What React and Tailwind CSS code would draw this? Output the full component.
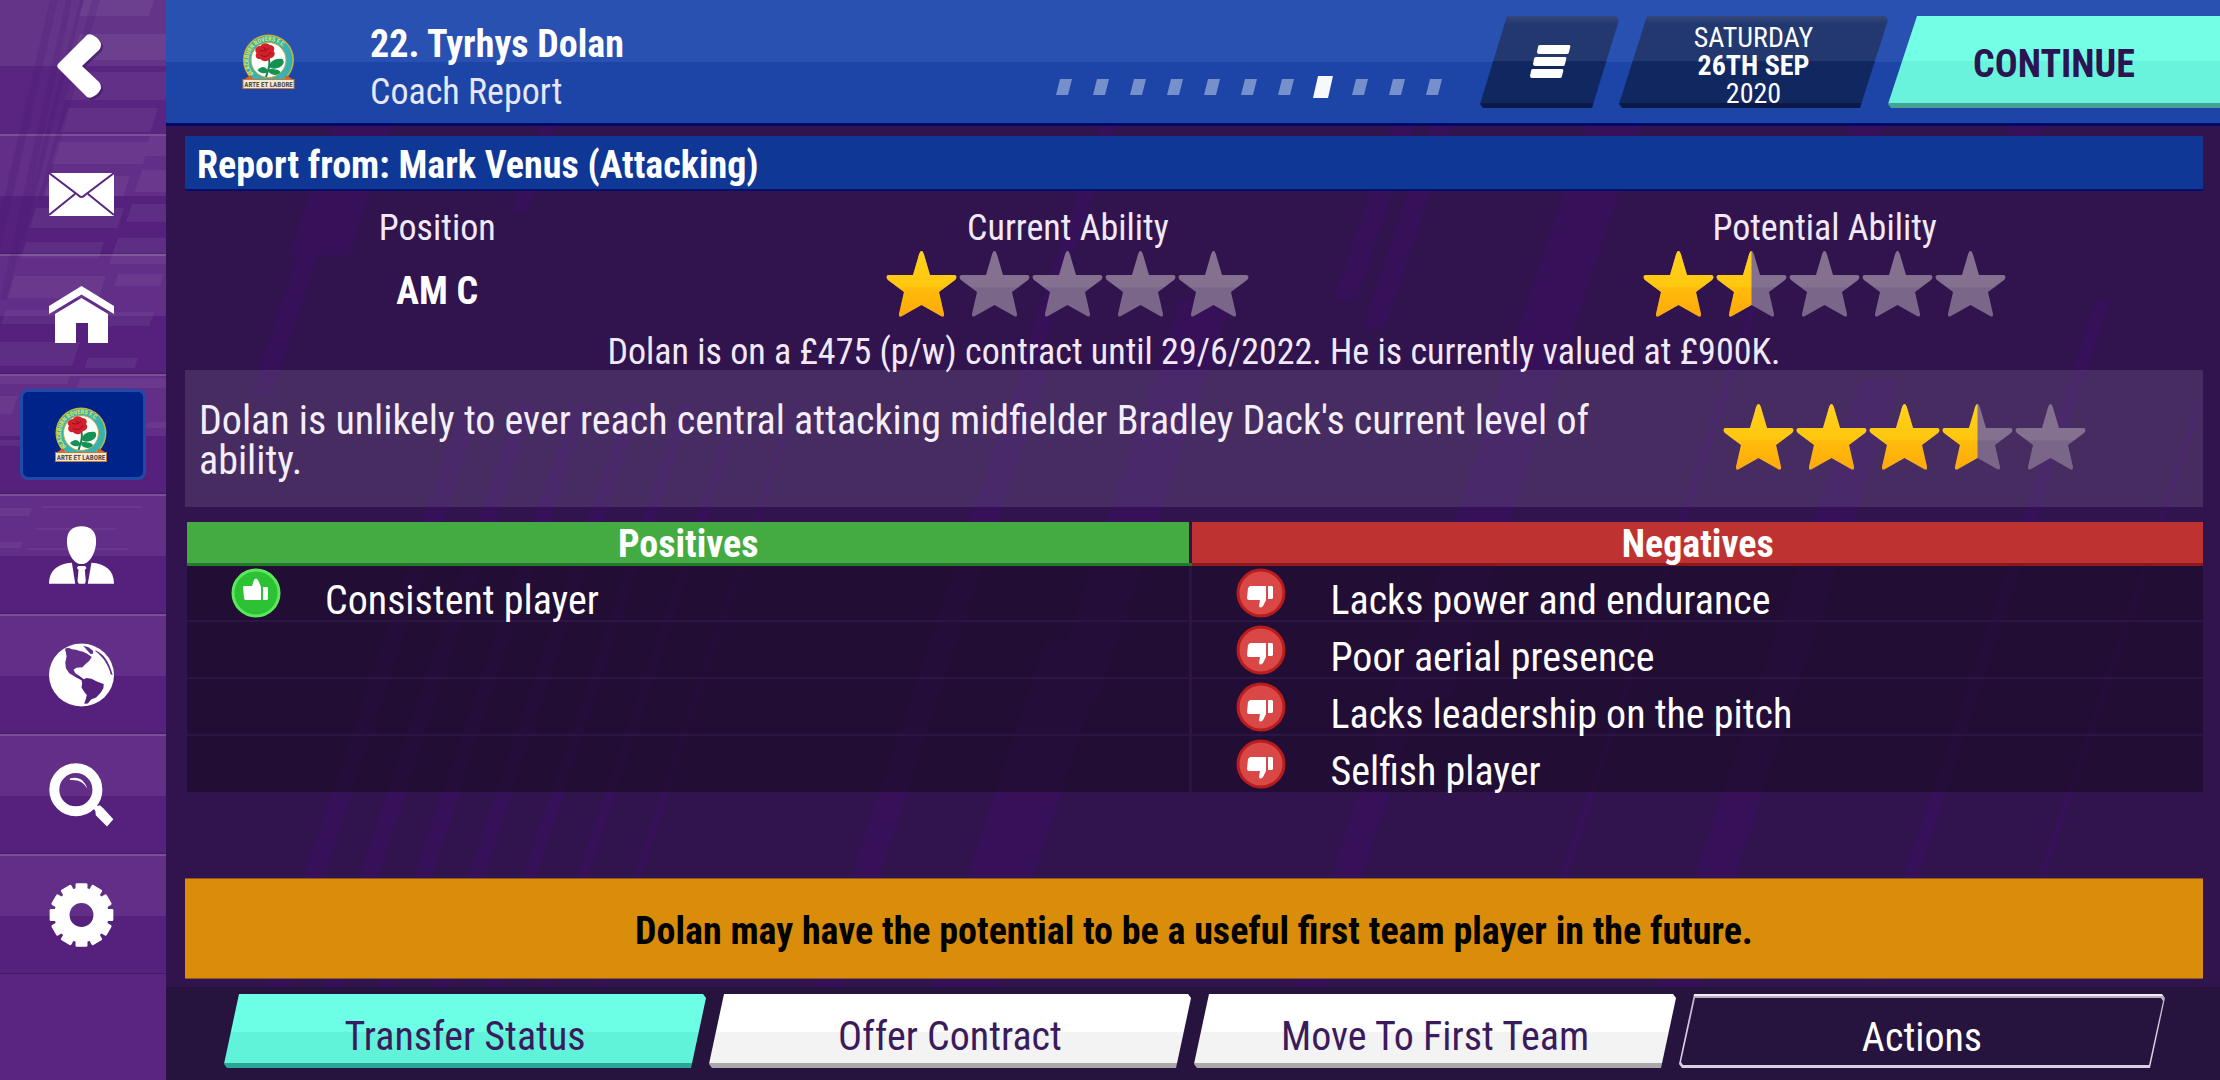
import { useId, useState } from "react";

const POSITIVES = ["Consistent player"];

const NEGATIVES = [
  "Lacks power and endurance",
  "Poor aerial presence",
  "Lacks leadership on the pitch",
  "Selfish player",
];

const PAGE_COUNT = 11;

// [x, y, width, bottom] of each diagonal band behind the report
const BANDS = [
  [332, 126, 60, 255],
  [298, 255, 20, 397],
  [540, 126, 16, 212],
  [462, 403, 20, 1080],
  [517, 403, 19, 1080],
  [572, 403, 18, 1080],
  [626, 403, 16, 1080],
  [681, 403, 13, 1080],
  [735, 403, 10, 1080],
  [792, 403, 6, 1080],
  [1100, 126, 16, 370],
  [1020, 370, 28, 1080],
  [1180, 300, 52, 700],
  [1046, 640, 66, 1080],
  [1392, 126, 22, 300],
  [1430, 126, 22, 327],
  [1586, 126, 56, 700],
  [1410, 640, 30, 1080],
  [1752, 300, 8, 900],
  [1860, 380, 40, 1080],
  [2096, 300, 14, 980],
  [2198, 400, 6, 900],
  [1850, 126, 34, 180],
  [2010, 126, 34, 160],
];

const SIDEBAR_BLOCKS = [
  [84, 0, 70, 16],
  [80, 34, 100, 26],
  [74, 72, 100, 28],
  [68, 108, 90, 24],
  [58, 142, 92, 22],
  [150, 136, 30, 20],
  [50, 176, 80, 20],
  [142, 170, 36, 22],
  [36, 208, 88, 20],
  [132, 204, 40, 18],
  [26, 242, 78, 16],
  [118, 238, 60, 26],
  [14, 276, 92, 22],
  [118, 274, 46, 12],
  [6, 310, 60, 14],
  [104, 312, 50, 14],
  [-10, 342, 90, 24],
  [88, 358, 50, 10],
  [-10, 376, 80, 8],
  [80, 378, 100, 10],
  [-10, 396, 28, 18],
  [148, 422, 30, 6],
  [-10, 440, 60, 6],
  [-10, 508, 42, 8],
  [42, 506, 100, 2],
  [36, 528, 80, 2],
  [-10, 542, 32, 6],
  [28, 548, 100, 2],
];

function Crest({ className }) {
  const id = useId();
  return (
    <svg viewBox="0 0 52 55" className={className} role="img" aria-label="Blackburn Rovers">
      <ellipse cx="26" cy="26" rx="25.5" ry="25.5" fill="#c9b23c" />
      <circle cx="26" cy="26" r="24" fill="#35b3b4" />
      <circle cx="26" cy="26" r="17.5" fill="#fdfdfb" stroke="#c9a63c" strokeWidth="1" />
      <path id={id} d="M11 40A20 20 0 1 1 41 40" fill="none" />
      <text fontSize="6" fontWeight="700" fill="#e3e54c">
        <textPath href={`#${id}`}>BLACKBURN ROVERS F.C.</textPath>
      </text>
      <path
        d="M26 24C28 29 27 33 25 38L23.500 43"
        fill="none"
        stroke="#11854a"
        strokeWidth="2"
      />
      <path
        d="M27 33C27 27 33 24 40 25C43 28 40 33 35 34C32 35 29 35 27 33ZM27 35C31 35 36 35 38 38C36 42 30 42 26 38ZM25 36C22 31 18 33 15 36C18 40 22 40 25 38Z"
        fill="#159152"
      />
      <path
        d="M14 19C11 16 14 12 18 12C20 8 26 9 27 11C31 11 33 14 31 17C34 20 31 24 28 24C26 28 20 28 18 25C14 26 12 22 14 19Z"
        fill="#d3202b"
      />
      <path
        d="M17 16C20 18 24 17 26 14M18 21C22 24 27 22 28 18M21 13L23 16"
        fill="none"
        stroke="#8d1220"
        strokeWidth="1"
      />
      <path d="M1 46L8 41L11 46ZM51 46L44 41L41 46Z" fill="#d2642c" />
      <rect x="0.500" y="45.500" width="51" height="9" fill="#f1ead0" stroke="#c07a3a" />
      <text
        x="26"
        y="52.500"
        textAnchor="middle"
        fontSize="7"
        fontWeight="700"
        fill="#5b4a4a"
      >
        ARTE ET LABORE
      </text>
    </svg>
  );
}

function BackIcon() {
  return (
    <svg viewBox="56 30 52 72" className="h-[72px] w-[52px]">
      <path
        d="M61 65L90 36C94 33 103 40 104 45C104 48 103 50 102 51L85 67L102 83C103 84 104 86 104 89C103 94 94 101 90 98Z"
        fill="#3c1760"
        opacity="0.600"
      />
      <path
        d="M59 63L88 34C92 31 101 38 102 43C102 46 101 48 100 49L83 65L100 81C101 82 102 84 102 87C101 92 92 99 88 96L59 67C58 66 58 64 59 63Z"
        fill="#fff"
      />
    </svg>
  );
}

function MailIcon() {
  return (
    <svg viewBox="0 0 65 43" className="h-[43px] w-[65px]">
      <rect width="65" height="43" fill="#fff" />
      <path
        d="M0 0L29 22Q32.500 26 36 22L65 0M0 42L26 21M65 42L39 21"
        fill="none"
        stroke="#5a2580"
        strokeWidth="2"
      />
    </svg>
  );
}

function HomeIcon() {
  return (
    <svg viewBox="49 286 65 57" className="h-[57px] w-[65px]">
      <path d="M49 306L81.500 286L114 306V314L81.500 294.500L49 314Z" fill="#fff" />
      <path d="M55 314L81.500 298L108 314V343H88V323H76V343H55Z" fill="#fff" />
    </svg>
  );
}

function PersonIcon() {
  return (
    <svg viewBox="57 81 196 175" className="h-[58px] w-[65px]">
      <g fill="#fff">
        <path d="M155 82C184 82 199 99 199 126C199 160 180 196 155 196C130 196 111 160 111 126C111 99 126 82 155 82Z" />
        <path d="M57 255C57 215 85 194 126 192L136 255Z" />
        <path d="M253 255C253 215 226 194 185 192L174 255Z" />
        <path d="M141 208L145 202H166L170 208L165 214L168 248L165 255H147L143 248L146 214Z" />
      </g>
    </svg>
  );
}

function GlobeIcon() {
  const id = useId();
  return (
    <svg viewBox="57 424 196 192" className="h-[64px] w-[65px]">
      <mask id={id}>
        <ellipse cx="155" cy="520" rx="98" ry="95" fill="#fff" />
        <g fill="#000">
          <path d="M105 441L116 438L126 442L138 444L150 448L160 450L172 456L186 466L178 478L168 486L158 497L140 498L131 504L136 514L150 524L162 533L170 529L185 531L203 540L222 547L221 560L212 574L199 588L184 594L174 606L163 607L168 592L171 580L164 572L155 558L157 545L155 536L138 527L118 515L108 500L106 482L110 464L108 452Z" />
          <path d="M160 432L176 436L190 447L190 456L182 457L172 445Z" />
          <path d="M198 446C218 454 238 476 249 520L243 518C236 488 218 464 196 448Z" />
        </g>
      </mask>
      <rect x="57" y="424" width="196" height="192" fill="#fff" mask={`url(#${id})`} />
    </svg>
  );
}

function SearchIcon() {
  return (
    <svg viewBox="57 785 196 192" className="h-[64px] w-[65px]">
      <circle cx="138" cy="865" r="65" fill="none" stroke="#fff" strokeWidth="30" />
      <path d="M120 831C146 824 164 836 173 862C160 842 146 834 120 836Z" fill="#fff" />
      <path d="M183 908L192 902L203 914L210 912L220 920L251 954L232 976L198 942L197 930Z" fill="#fff" />
    </svg>
  );
}

function GearIcon() {
  return (
    <svg viewBox="-98 -96 196 192" className="h-[64px] w-[65px]">
      <circle r="59" fill="none" stroke="#fff" strokeWidth="46" />
      {Array.from({ length: 12 }, (_, i) => (
        <path
          key={i}
          d="M-18 -74V-92Q-18 -96 -14 -96H14Q18 -96 18 -92V-74Z"
          fill="#fff"
          transform={`rotate(${i * 30})`}
        />
      ))}
    </svg>
  );
}

const STAR =
  "M35.500 0C37 0 38 3 39 7L44 24L68 24C71 24 71 27 69 29L53 41L58 63C58 66 57 66 55 65L35.500 54L16 65C14 66 13 66 13 63L18 41L2 29C0 27 0 24 3 24L27 24L32 7C33 3 34 0 35.500 0Z";

function Star({ fill }) {
  const id = useId();
  return (
    <svg viewBox="0 0 71 66" className="h-[66px] w-[71px]">
      <defs>
        <linearGradient id={`${id}g`} x1="0" y1="0" x2="0" y2="1">
          <stop offset="0" stopColor="#ffd21c" />
          <stop offset="0.550" stopColor="#ffc60f" />
          <stop offset="0.560" stopColor="#ffbc0a" />
          <stop offset="1" stopColor="#ffa90c" />
        </linearGradient>
        <linearGradient id={`${id}e`} x1="0" y1="0" x2="0" y2="1">
          <stop offset="0.550" stopColor="#84708f" />
          <stop offset="0.560" stopColor="#7a6688" />
        </linearGradient>
        <clipPath id={`${id}c`}>
          <rect width={71 * fill} height="66" />
        </clipPath>
      </defs>
      <path d={STAR} fill={`url(#${id}e)`} />
      <path d={STAR} fill={`url(#${id}g)`} clipPath={`url(#${id}c)`} />
    </svg>
  );
}

function StarRating({ value }) {
  return (
    <div className="flex gap-[2px]" role="img" aria-label={`${value} out of 5 stars`}>
      {[0, 1, 2, 3, 4].map((i) => (
        <Star key={i} fill={Math.max(0, Math.min(1, value - i))} />
      ))}
    </div>
  );
}

function ThumbIcon({ up }) {
  return (
    <svg viewBox="0 0 50 50" className="h-[50px] w-[50px] shrink-0">
      <circle
        cx="25"
        cy="25"
        r="23"
        fill={up ? "#2cc234" : "#d94747"}
        stroke={up ? "#5be85c" : "#b81c1c"}
        strokeWidth="3"
      />
      {up ? (
        <path
          d="M12 19Q12 18 14 18H21L23 12Q25 9 27 12L30 19V32H15Q13 32 13 30ZM32 19H36L37 20V31L36 32H32Z"
          fill="#fff"
        />
      ) : (
        <path
          d="M14 18H30V32L27 38Q24 41 23 38L24 32H13Q11 32 11 30L12 20ZM32 18H36L37 19V30L36 31H32Z"
          fill="#fff"
        />
      )}
    </svg>
  );
}

const NAV_ITEMS = [
  { id: "inbox", label: "Inbox", Icon: MailIcon },
  { id: "home", label: "Home", Icon: HomeIcon },
  { id: "club", label: "Club", Icon: null },
  { id: "manager", label: "Manager", Icon: PersonIcon },
  { id: "world", label: "World", Icon: GlobeIcon },
  { id: "search", label: "Search", Icon: SearchIcon },
  { id: "settings", label: "Settings", Icon: GearIcon },
];

function Sidebar() {
  return (
    <nav className="relative flex w-[166px] shrink-0 flex-col overflow-hidden bg-[#5a2580]">
      <button
        type="button"
        aria-label="Back"
        className="flex h-[134px] items-center justify-center bg-[linear-gradient(#643489_49%,#592581_49%)]"
      >
        <span className="z-10 pr-1">
          <BackIcon />
        </span>
      </button>
      {NAV_ITEMS.map(({ id, label, Icon }) => (
        <button
          key={id}
          type="button"
          aria-label={label}
          className="flex h-[120px] items-center justify-center border-t-2 border-b border-t-[#7a4f98] border-b-[#431b66] bg-[linear-gradient(#622e88_51%,#55217d_51%)]"
        >
          {Icon ? (
            <span className="z-10 pr-1">
              <Icon />
            </span>
          ) : (
            <span className="z-10 flex h-[91px] w-[126px] items-center justify-center rounded-lg border-3 border-[#1f4aa8] bg-[#00238a] pr-1">
              <Crest className="h-[55px] w-[52px]" />
            </span>
          )}
        </button>
      ))}
      <svg
        viewBox="0 0 166 1080"
        className="pointer-events-none absolute top-0 left-0 h-[1080px] w-[166px]"
        aria-hidden="true"
      >
        <g fill="#fff" opacity="0.050">
          {SIDEBAR_BLOCKS.map(([x, y, w, h]) => (
            <path key={`${x}-${y}`} d={`M${x} ${y}h${w}l${-h / 3} ${h}h${-w}Z`} />
          ))}
        </g>
        <g fill="#3f1268" opacity="0.160">
          <path d="M50 0H58L0 250V215Z" />
          <path d="M66 0H72L8 300H0Z" />
          <path d="M80 0H84L24 240H18Z" />
          <path d="M92 0H100L44 200H38Z" />
        </g>
      </svg>
    </nav>
  );
}

function Header({ page, onPage }) {
  return (
    <header className="flex h-[126px] shrink-0 items-start border-b-3 border-[#02086a] bg-[linear-gradient(#2951b1_50%,#1d45a7_50%)] pt-4">
      <Crest className="mt-[18px] ml-[76px] h-[55px] w-[53px]" />
      <div className="ml-[75px] pt-1 whitespace-nowrap">
        <h1 className="text-[38px] leading-[48px] font-bold">22. Tyrhys Dolan</h1>
        <p className="text-[36px] leading-[48px] text-[#e4e8f8]">Coach Report</p>
      </div>
      <div className="mt-[60px] mr-[38px] ml-auto flex h-[22px] items-center gap-[21px]">
        {Array.from({ length: PAGE_COUNT }, (_, i) => (
          <button
            key={i}
            type="button"
            aria-label={`Page ${i + 1}`}
            onClick={() => onPage(i)}
            className={
              i === page
                ? "-mx-[2px] h-[22px] w-5 bg-[#f7f8fb] [clip-path:polygon(25%_0,100%_0,75%_100%,0_100%)]"
                : "h-4 w-4 bg-[#7590cb] [clip-path:polygon(25%_0,100%_0,75%_100%,0_100%)]"
            }
          />
        ))}
      </div>
      <button
        type="button"
        aria-label="Menu"
        className="flex h-[92px] w-[139px] items-center justify-center bg-[linear-gradient(#35477a_0,#22386f_8px,#22386f_49%,#11275f_49%,#11275f_87px,#0a1947_87px)] [clip-path:polygon(27px_0,calc(100%-3px)_0,100%_4px,calc(100%-27px)_100%,3px_100%,0_calc(100%-4px))]"
      >
        <svg viewBox="0 0 42 34" className="h-[34px] w-[42px]">
          <path
            d="M11 0H40Q42 0 41 3L40 7Q40 9 38 9H10Q8 9 8 7L9 2Q9 0 11 0ZM7 12H36Q38 12 37 15L36 19Q36 21 34 21H6Q4 21 4 19L5 14Q5 12 7 12ZM4 24H33Q35 24 34 27L33 31Q33 33 31 33H3Q1 33 1 31L2 26Q2 24 4 24Z"
            fill="#fff"
          />
        </svg>
      </button>
      <button
        type="button"
        className="flex h-[92px] w-[269px] flex-col items-center pt-2 text-[28px] leading-[28px] bg-[linear-gradient(#35477a_0,#22386f_8px,#22386f_49%,#11275f_49%,#11275f_87px,#0a1947_87px)] [clip-path:polygon(28px_0,calc(100%-3px)_0,100%_4px,calc(100%-28px)_100%,3px_100%,0_calc(100%-4px))]"
      >
        <span>SATURDAY</span>
        <b>26TH SEP</b>
        <span>2020</span>
      </button>
      <button
        type="button"
        className="h-[92px] w-[332px] pt-1 text-[38px] font-bold text-[#2b1450] bg-[linear-gradient(#72ffe6_49%,#69f3dc_49%,#69f3dc_87px,#45a294_87px)] [clip-path:polygon(29px_0,100%_0,100%_100%,3px_100%,0_calc(100%-4px))]"
      >
        CONTINUE
      </button>
    </header>
  );
}

function ReasonCell({ text, up }) {
  return (
    <div className="flex h-full items-center gap-[44px] pl-[44px]">
      {text && (
        <>
          <ThumbIcon up={up} />
          <span className="pt-4 text-[40px] leading-[38px]">{text}</span>
        </>
      )}
    </div>
  );
}

function ReasonsTable() {
  const rows = Math.max(POSITIVES.length, NEGATIVES.length);
  return (
    <table className="mt-[15px] ml-[2px] table-fixed border-collapse text-left">
      <colgroup>
        <col className="w-[49.8%]" />
        <col />
      </colgroup>
      <thead>
        <tr className="h-[42px] text-[38px] leading-[36px]">
          <th className="border-r-3 border-b-3 border-r-[#2f154c] border-b-[#237a2b] bg-[#43ab41] p-0 pt-1 text-center">
            Positives
          </th>
          <th className="border-b-3 border-b-[#8b1a1c] bg-[#be3231] p-0 pt-1 text-center">
            Negatives
          </th>
        </tr>
      </thead>
      <tbody>
        {Array.from({ length: rows }, (_, i) => (
          <tr
            key={i}
            className="h-[57px] border-b-2 border-[#2c1545] bg-[#1d0b2a]/70 last:border-b-0"
          >
            <td className="h-[57px] border-r-3 border-[#2c1545] p-0">
              <ReasonCell text={POSITIVES[i]} up />
            </td>
            <td className="h-[57px] p-0">
              <ReasonCell text={NEGATIVES[i]} />
            </td>
          </tr>
        ))}
      </tbody>
    </table>
  );
}

function Footer() {
  return (
    <footer className="flex h-[93px] shrink-0 gap-[3px] bg-[#26143e] pt-[7px] pr-[55px] pl-[58px] text-[40px] text-[#3a1b5c]">
      <button
        type="button"
        className="h-[74px] flex-1 pt-3 bg-[linear-gradient(#6dffe5_51%,#61f3d9_51%,#61f3d9_69px,#2aa697_69px)] [clip-path:polygon(15px_0,calc(100%-3px)_0,100%_4px,calc(100%-15px)_100%,3px_100%,0_calc(100%-4px))]"
      >
        Transfer Status
      </button>
      <button
        type="button"
        className="h-[74px] flex-1 pt-3 bg-[linear-gradient(#ffffff_51%,#f3f3f3_51%,#f3f3f3_69px,#a9a9a9_69px)] [clip-path:polygon(15px_0,calc(100%-3px)_0,100%_4px,calc(100%-15px)_100%,3px_100%,0_calc(100%-4px))]"
      >
        Offer Contract
      </button>
      <button
        type="button"
        className="h-[74px] flex-1 pt-3 bg-[linear-gradient(#ffffff_51%,#f3f3f3_51%,#f3f3f3_69px,#a9a9a9_69px)] [clip-path:polygon(15px_0,calc(100%-3px)_0,100%_4px,calc(100%-15px)_100%,3px_100%,0_calc(100%-4px))]"
      >
        Move To First Team
      </button>
      <button
        type="button"
        className="flex h-[74px] flex-1 bg-[linear-gradient(#f4eefa_2px,#b9aec6_2px,#d8cfe4_50%)] px-[2px] pt-1 pb-[3px] text-white [clip-path:polygon(15px_0,calc(100%-3px)_0,100%_4px,calc(100%-15px)_100%,3px_100%,0_calc(100%-4px))]"
      >
        <span className="flex flex-1 items-center justify-center bg-[#26143e] pt-3 [clip-path:polygon(14px_0,calc(100%-2px)_0,100%_3px,calc(100%-14px)_100%,2px_100%,0_calc(100%-3px))]">
          Actions
        </span>
      </button>
    </footer>
  );
}

export default function App() {
  const [page, setPage] = useState(7);

  return (
    <div className="flex min-h-screen bg-[#31144e] font-['Roboto_Condensed',Roboto,sans-serif] text-white">
      <Sidebar />
      <div className="relative isolate flex min-w-0 flex-1 flex-col">
        <svg
          viewBox="166 0 2054 1080"
          preserveAspectRatio="none"
          className="absolute inset-0 -z-10 h-full w-full"
          aria-hidden="true"
        >
          {BANDS.map(([x, y, w, bottom]) => (
            <path
              key={`${x}-${y}`}
              d={`M${x} ${y}h${w}l${(y - bottom) / 3} ${bottom - y}h${-w}Z`}
              fill="#36115a"
            />
          ))}
        </svg>

        <Header page={page} onPage={setPage} />

        <main className="flex flex-1 flex-col pt-[10px] pr-[17px] pb-2 pl-[19px] text-[36px] leading-[40px]">
          <h2 className="h-[55px] border-b-2 border-[#06106a] bg-[#0f3796] pt-[2px] pl-3 text-[38px] leading-[55px] font-bold">
            Report from: Mark Venus (Attacking)
          </h2>

          <section className="grid grid-cols-[2fr_3fr_3fr] pt-[17px] text-[#f1e9f7]">
            <div className="flex flex-col items-center">
              <h3>Position</h3>
              <p className="flex h-[86px] items-center text-[38px] font-bold text-white">AM C</p>
            </div>
            <div className="flex flex-col items-center gap-[3px]">
              <h3>Current Ability</h3>
              <StarRating value={1} />
            </div>
            <div className="flex flex-col items-center gap-[3px]">
              <h3>Potential Ability</h3>
              <StarRating value={1.5} />
            </div>
            <p className="col-span-3 text-center leading-[36px]">
              Dolan is on a £475 (p/w) contract until 29/6/2022. He is currently valued at £900K.
            </p>
          </section>

          <section className="grid h-[137px] grid-cols-[7fr_3fr] items-center bg-white/10 text-[#f4eefa]">
            <p className="pt-1 pl-[14px] text-[40px] leading-[40px]">
              Dolan is unlikely to ever reach central attacking midfielder Bradley Dack&apos;s
              current level of ability.
            </p>
            <div className="flex justify-center pb-1 pl-2">
              <StarRating value={3.5} />
            </div>
          </section>

          <ReasonsTable />

          <p className="mt-auto flex h-[101px] items-center justify-center border-y border-[#8f5a1c] bg-[#da8c0b] pt-1 text-[38px] font-bold text-black">
            Dolan may have the potential to be a useful first team player in the future.
          </p>
        </main>

        <Footer />
      </div>
    </div>
  );
}
